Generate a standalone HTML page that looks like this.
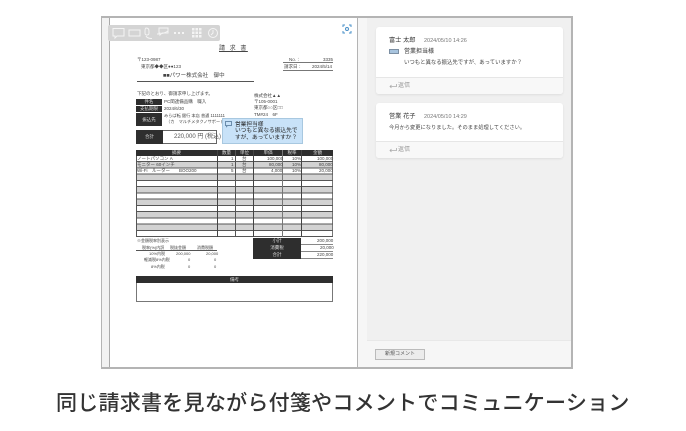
<!DOCTYPE html>
<html lang="ja"><head><meta charset="utf-8">
<style>
html,body{margin:0;padding:0;background:#fff}
body{width:686px;height:431px;position:relative;overflow:hidden;font-family:"Liberation Sans","Noto Sans CJK JP",sans-serif;color:#333}
div,span{position:absolute;box-sizing:border-box}
.t{white-space:nowrap;line-height:1;color:#444}
.d{background:#2e2e2e;color:#ddd;text-align:center;white-space:nowrap;font-size:4.500px}
</style></head><body>
<!-- frame -->
<div style="left:101px;top:16px;width:472px;height:353px;border:2px solid #b4b4b4;border-left-width:1px;background:#fff"></div>
<div style="left:102px;top:18px;width:8px;height:349px;background:#f2f2f2;border-right:1px solid #aaa"></div>
<div style="left:357px;top:18px;width:1px;height:349px;background:#b4b4b4"></div>
<div style="left:358px;top:18px;width:213px;height:349px;background:#f6f6f6"></div>
<div style="left:367px;top:18px;width:204px;height:323px;background:#f0f0f0"></div>
<div style="left:367px;top:340px;width:204px;height:1px;background:#e8e8e8"></div>

<!-- invoice -->
<div style="left:0;top:0;width:686px;height:431px;filter:blur(.3px)">
<div class="t" style="left:219px;top:46px;font-size:6px;letter-spacing:1.500px;text-decoration:underline">請 求 書</div>
<div class="t" style="left:137px;top:58px;font-size:4.500px">〒123-0987</div>
<div class="t" style="left:141px;top:65px;font-size:4.500px">東京都◆◆区●●123</div>
<div style="left:283px;top:62px;width:50px;height:1px;background:#777"></div>
<div style="left:283px;top:70px;width:50px;height:1px;background:#777"></div>
<div class="t" style="left:289px;top:58px;font-size:4.500px">No.：</div>
<div class="t" style="left:323px;top:58px;font-size:4.500px">3335</div>
<div class="t" style="left:284px;top:65px;font-size:4.500px">請求日：</div>
<div class="t" style="left:312px;top:65px;font-size:4.500px">2024/5/14</div>
<div class="t" style="left:163px;top:74px;font-size:5.500px">■■パワー株式会社　御中</div>
<div style="left:137px;top:81px;width:117px;height:1px;background:#555"></div>
<div class="t" style="left:137px;top:92px;font-size:4.500px">下記のとおり、御請求申し上げます。</div>
<div class="t" style="left:254px;top:94px;font-size:4.500px">株式会社▲▲</div>
<div class="t" style="left:254px;top:100px;font-size:4.500px">〒105-0001</div>
<div class="t" style="left:254px;top:106px;font-size:4.500px">東京都○○区□□</div>
<div class="t" style="left:254px;top:113px;font-size:4.500px">TM#24　6F</div>

<div class="d" style="left:136px;top:99px;width:26px;height:6px;line-height:6px">件名</div>
<div class="d" style="left:136px;top:106px;width:26px;height:6px;line-height:6px">支払期限</div>
<div class="d" style="left:136px;top:113px;width:26px;height:13px;line-height:13px">振込先</div>
<div class="t" style="left:164px;top:100px;font-size:4.500px">PC関連備品購　職入</div>
<div class="t" style="left:164px;top:107px;font-size:4.500px">2024/6/30</div>
<div class="t" style="left:164px;top:114px;font-size:4.200px">みらば転 銀行 本店 普通 1111111</div>
<div class="t" style="left:166px;top:120px;font-size:4.200px">（カ　マルチメタクノサポート</div>

<div style="left:136px;top:130px;width:81px;height:14px;border:1px solid #666;background:#fff"></div>
<div class="d" style="left:136px;top:130px;width:27px;height:14px;line-height:14px">合計</div>
<div class="t" style="left:174px;top:134px;font-size:6px;color:#555">220,000 円 (税込)</div>

<!-- table -->
<div style="left:136px;top:150px;width:197px;height:6px;background:#2e2e2e"></div>
<div class="d" style="left:136px;top:150px;width:81px;height:6px;line-height:6px">摘要</div>
<div class="d" style="left:218px;top:150px;width:17px;height:6px;line-height:6px">数量</div>
<div class="d" style="left:236px;top:150px;width:17px;height:6px;line-height:6px">単位</div>
<div class="d" style="left:254px;top:150px;width:28px;height:6px;line-height:6px">単価</div>
<div class="d" style="left:283px;top:150px;width:18px;height:6px;line-height:6px">税率</div>
<div class="d" style="left:302px;top:150px;width:31px;height:6px;line-height:6px">金額</div>
<div style="left:136px;top:156px;width:197px;height:81px;background:repeating-linear-gradient(#fff 0,#fff 6.230px,#d2d2d2 6.230px,#d2d2d2 12.460px);border-left:1px solid #555;border-right:1px solid #777;border-bottom:1px solid #444"></div>
<div style="left:136px;top:156px;width:197px;height:81px;background:repeating-linear-gradient(transparent 0,transparent 5.230px,#555 5.230px,#555 6.230px)"></div>
<div style="left:217px;top:150px;width:1px;height:87px;background:#444"></div>
<div style="left:235px;top:150px;width:1px;height:87px;background:#555"></div>
<div style="left:253px;top:150px;width:1px;height:87px;background:#444"></div>
<div style="left:282px;top:150px;width:1px;height:87px;background:#777"></div>
<div style="left:301px;top:150px;width:1px;height:87px;background:#444"></div>
<div class="t" style="left:137px;top:157px;font-size:4.500px">ノートパソコン A</div>
<div class="t" style="left:137px;top:163px;font-size:4.500px">モニター 60インチ</div>
<div class="t" style="left:137px;top:169px;font-size:4.500px">Wi-Fi　ルーター　　BOO200</div>
<div class="t" style="left:231px;top:157px;font-size:4.500px">1</div><div class="t" style="left:242px;top:157px;font-size:4.500px">台</div><div class="t" style="left:267px;top:157px;font-size:4.500px">100,000</div><div class="t" style="left:292px;top:157px;font-size:4.500px">10%</div><div class="t" style="left:317px;top:157px;font-size:4.500px">100,000</div>
<div class="t" style="left:231px;top:163px;font-size:4.500px">1</div><div class="t" style="left:242px;top:163px;font-size:4.500px">台</div><div class="t" style="left:269px;top:163px;font-size:4.500px">80,000</div><div class="t" style="left:292px;top:163px;font-size:4.500px">10%</div><div class="t" style="left:319px;top:163px;font-size:4.500px">80,000</div>
<div class="t" style="left:231px;top:169px;font-size:4.500px">5</div><div class="t" style="left:242px;top:169px;font-size:4.500px">台</div><div class="t" style="left:271px;top:169px;font-size:4.500px">4,000</div><div class="t" style="left:292px;top:169px;font-size:4.500px">10%</div><div class="t" style="left:319px;top:169px;font-size:4.500px">20,000</div>

<!-- totals -->
<div class="d" style="left:253px;top:238px;width:48px;height:6.500px;line-height:6.500px">小計</div>
<div class="d" style="left:253px;top:245px;width:48px;height:6.500px;line-height:6.500px">消費税</div>
<div class="d" style="left:253px;top:252px;width:48px;height:6.500px;line-height:6.500px">合計</div>
<div style="left:301px;top:244px;width:32px;height:1px;background:#888"></div>
<div style="left:301px;top:251px;width:32px;height:1px;background:#888"></div>
<div style="left:301px;top:258px;width:32px;height:1px;background:#888"></div>
<div class="t" style="left:317px;top:239px;font-size:4.500px">200,000</div>
<div class="t" style="left:320px;top:246px;font-size:4.500px">20,000</div>
<div class="t" style="left:317px;top:253px;font-size:4.500px">220,000</div>
<div class="t" style="left:137px;top:239px;font-size:4px">※金額税率別表示</div>
<div class="t" style="left:142px;top:246px;font-size:4px">税率(%)内訳</div>
<div class="t" style="left:170px;top:246px;font-size:4px">税抜金額</div>
<div class="t" style="left:197px;top:246px;font-size:4px">消費税額</div>
<div style="left:136px;top:250px;width:81px;height:1px;background:#555"></div>
<div class="t" style="left:149px;top:252px;font-size:4px">10%内税</div>
<div class="t" style="left:176px;top:252px;font-size:4px">200,000</div>
<div class="t" style="left:206px;top:252px;font-size:4px">20,000</div>
<div class="t" style="left:144px;top:258px;font-size:4px">軽減税8%内税</div>
<div class="t" style="left:188px;top:258px;font-size:4px">0</div>
<div class="t" style="left:214px;top:258px;font-size:4px">0</div>
<div class="t" style="left:151px;top:265px;font-size:4px">8%内税</div>
<div class="t" style="left:188px;top:265px;font-size:4px">0</div>
<div class="t" style="left:214px;top:265px;font-size:4px">0</div>
<!-- remarks -->
<div style="left:136px;top:276px;width:197px;height:26px;border:1px solid #777;border-top:0;background:#fff"></div>
<div class="d" style="left:136px;top:276px;width:197px;height:7px;line-height:7px">備考</div>
</div>

<!-- toolbar -->
<div style="left:108px;top:25px;width:112px;height:16px;background:#d4d4d4;border-radius:2px"></div>
<svg style="position:absolute;left:108px;top:25px" width="112" height="16" fill="none" stroke="#f4f4f4" stroke-width="1">
<path d="M5 3.500h11v7.500h-7l-2 2v-2h-2z"/>
<rect x="21" y="5" width="11" height="6"/>
<path d="M38 3c3 0 3 2 3 4s0 3-2 3-2-1-2-3 0-4 1-4zM38 11c1 2 3 2.500 6 2.500"/>
<path d="M51 3h9v5h-6l-2 2v-2h-1zM49 9c4 0 8-1 11-3"/>
</svg>
<div style="left:174px;top:32px;width:2px;height:2px;background:#f4f4f4;box-shadow:4px 0 #f4f4f4,8px 0 #f4f4f4"></div>
<svg style="position:absolute;left:192px;top:28px" width="30" height="11" fill="#f4f4f4">
<rect width="2.500" height="2.500" x="0" y="0"/><rect width="2.500" height="2.500" x="3.500" y="0"/><rect width="2.500" height="2.500" x="7" y="0"/>
<rect width="2.500" height="2.500" x="0" y="3.500"/><rect width="2.500" height="2.500" x="3.500" y="3.500"/><rect width="2.500" height="2.500" x="7" y="3.500"/>
<rect width="2.500" height="2.500" x="0" y="7"/><rect width="2.500" height="2.500" x="3.500" y="7"/><rect width="2.500" height="2.500" x="7" y="7"/>
<circle cx="21" cy="5" r="4.500" fill="none" stroke="#f4f4f4"/><path d="M21 2v3l-2 2" fill="none" stroke="#f4f4f4"/>
</svg>
<!-- fit icon -->
<svg style="position:absolute;left:342px;top:24px" width="10" height="10" fill="none" stroke="#4a90c8" stroke-width="1">
<path d="M1 3V1h2M7 1h2v2M9 7v2H7M3 9H1V7"/><circle cx="5" cy="5" r="1.500"/>
</svg>

<!-- sticky -->
<div style="left:222px;top:118px;width:81px;height:26px;background:#c8e2f8;border:1px solid #a8c8e0"></div>
<svg style="position:absolute;left:225px;top:121px" width="8" height="7" fill="none" stroke="#6a8cab"><path d="M.5.500h6v4h-4l-1 1v-1h-1z"/></svg>
<div class="t" style="left:235px;top:122px;font-size:5.700px;line-height:6.300px;color:#222;white-space:pre">営業担当様
いつもと異なる振込先で
すが、あっていますか？</div>

<!-- card 1 -->
<div style="left:376px;top:27px;width:187px;height:67px;background:#fff;border-radius:3px;box-shadow:0 1px 2px rgba(0,0,0,.08)"></div>
<div style="left:376px;top:77px;width:187px;height:17px;background:#f8f8f8;border-top:1px solid #e6e6e6;border-radius:0 0 3px 3px"></div>
<div class="t" style="left:389px;top:38px;font-size:6.200px;color:#333">富士 太郎</div>
<div class="t" style="left:424px;top:39px;font-size:5.500px;color:#777">2024/05/10 14:26</div>
<div style="left:389px;top:49px;width:10px;height:5px;background:#a8c4de;border:1px solid #7c8fa3"></div>
<div class="t" style="left:404px;top:49px;font-size:6px;color:#333">営業担当様</div>
<div class="t" style="left:404px;top:61px;font-size:5.400px;color:#444">いつもと異なる振込先ですが、あっていますか？</div>
<svg style="position:absolute;left:389px;top:83px" width="8" height="6" fill="none" stroke="#aaa" stroke-width=".8"><path d="M7.500 1v2.500H1M2.500 2L1 3.500 2.500 5"/></svg>
<div class="t" style="left:398px;top:83px;font-size:6px;color:#999">返信</div>
<!-- card 2 -->
<div style="left:376px;top:103px;width:187px;height:55px;background:#fff;border-radius:3px;box-shadow:0 1px 2px rgba(0,0,0,.08)"></div>
<div style="left:376px;top:141px;width:187px;height:17px;background:#f8f8f8;border-top:1px solid #e6e6e6;border-radius:0 0 3px 3px"></div>
<div class="t" style="left:389px;top:114px;font-size:6.200px;color:#333">営業 花子</div>
<div class="t" style="left:424px;top:115px;font-size:5.500px;color:#777">2024/05/10 14:29</div>
<div class="t" style="left:389px;top:126px;font-size:5.250px;color:#444">今月から変更になりました。そのまま処理してください。</div>
<svg style="position:absolute;left:389px;top:147px" width="8" height="6" fill="none" stroke="#aaa" stroke-width=".8"><path d="M7.500 1v2.500H1M2.500 2L1 3.500 2.500 5"/></svg>
<div class="t" style="left:398px;top:147px;font-size:6px;color:#999">返信</div>
<!-- button -->
<div style="left:375px;top:349px;width:50px;height:11px;background:#ececec;border:1px solid #bbb;font-size:5px;line-height:9px;text-align:center;color:#555;white-space:nowrap">新規コメント</div>
<!-- caption -->
<div class="t" style="left:56px;top:392px;font-size:21px;letter-spacing:.26px;font-weight:500;color:#333;font-family:'Noto Sans CJK JP','Liberation Sans',sans-serif">同じ請求書を見ながら付箋やコメントでコミュニケーション</div>
</body></html>
